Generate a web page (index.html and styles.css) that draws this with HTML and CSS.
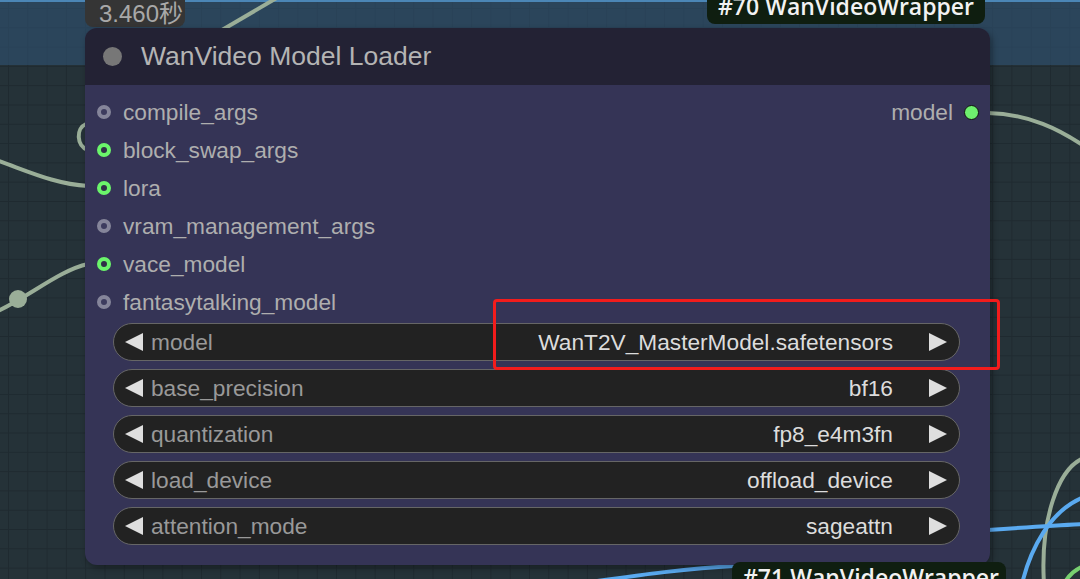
FILE: index.html
```html
<!doctype html>
<html lang="en">
<head>
	<meta charset="UTF-8">
	<title>WanVideo Model Loader</title>
	<link rel="stylesheet" href="styles.css">
</head>
<body>
	<div class="canvas">
		<div class="group_band"></div>

		<!-- 连线 -->
		<svg class="wires" width="1080" height="579" viewBox="0 0 1080 579">
			<path class="wire" d="M222 30 L280 -4"/>
			<path class="wire" d="M86 124 C76 128 76 146 88 150"/>
			<path class="wire" d="M-4 160 C30 172 55 184 88 186"/>
			<path class="wire" d="M-4 312 C30 296 60 270 88 264"/>
			<circle class="reroute" cx="18" cy="299" r="9"/>
			<path class="wire" d="M988 113 C1030 114 1060 130 1084 146"/>
			<path class="wire" d="M1084 458 C1058 468 1040 520 1044 584"/>
			<path class="wire blue" d="M988 530 C1030 527 1060 525 1084 524"/>
			<path class="wire blue" d="M1084 497 C1050 510 1030 550 1022 584"/>
			<path class="wire green" d="M1084 566 C1074 570 1068 576 1064 584"/>
			<path class="wire blue" d="M590 582 C640 575 690 568 734 566"/>
		</svg>

		<div class="badge_time">3.460秒</div>
		<div class="badge_id badge_top">#70 WanVideoWrapper</div>

		<div class="node">
			<div class="node_title">
				<span class="title_dot"></span>
				<span>WanVideo Model Loader</span>
			</div>
			<div class="node_body">
				<div class="slots">
					<div class="inputs">
						<div class="slot"><span class="slot_dot"></span>compile_args</div>
						<div class="slot"><span class="slot_dot linked"></span>block_swap_args</div>
						<div class="slot"><span class="slot_dot linked"></span>lora</div>
						<div class="slot"><span class="slot_dot"></span>vram_management_args</div>
						<div class="slot"><span class="slot_dot linked"></span>vace_model</div>
						<div class="slot"><span class="slot_dot"></span>fantasytalking_model</div>
					</div>
					<div class="outputs">
						<div class="slot">model<span class="out_dot"></span></div>
					</div>
				</div>
				<div class="widgets">
					<div class="widget">
						<svg class="arrow" width="18" height="18" viewBox="0 0 18 18"><polygon points="0,9 18,0 18,18"/></svg>
						<span class="w_label">model</span>
						<span class="w_value">WanT2V_MasterModel.safetensors</span>
						<svg class="arrow" width="18" height="18" viewBox="0 0 18 18"><polygon points="18,9 0,0 0,18"/></svg>
					</div>
					<div class="widget">
						<svg class="arrow" width="18" height="18" viewBox="0 0 18 18"><polygon points="0,9 18,0 18,18"/></svg>
						<span class="w_label">base_precision</span>
						<span class="w_value">bf16</span>
						<svg class="arrow" width="18" height="18" viewBox="0 0 18 18"><polygon points="18,9 0,0 0,18"/></svg>
					</div>
					<div class="widget">
						<svg class="arrow" width="18" height="18" viewBox="0 0 18 18"><polygon points="0,9 18,0 18,18"/></svg>
						<span class="w_label">quantization</span>
						<span class="w_value">fp8_e4m3fn</span>
						<svg class="arrow" width="18" height="18" viewBox="0 0 18 18"><polygon points="18,9 0,0 0,18"/></svg>
					</div>
					<div class="widget">
						<svg class="arrow" width="18" height="18" viewBox="0 0 18 18"><polygon points="0,9 18,0 18,18"/></svg>
						<span class="w_label">load_device</span>
						<span class="w_value">offload_device</span>
						<svg class="arrow" width="18" height="18" viewBox="0 0 18 18"><polygon points="18,9 0,0 0,18"/></svg>
					</div>
					<div class="widget">
						<svg class="arrow" width="18" height="18" viewBox="0 0 18 18"><polygon points="0,9 18,0 18,18"/></svg>
						<span class="w_label">attention_mode</span>
						<span class="w_value">sageattn</span>
						<svg class="arrow" width="18" height="18" viewBox="0 0 18 18"><polygon points="18,9 0,0 0,18"/></svg>
					</div>
				</div>
			</div>
		</div>

		<div class="highlight"></div>
		<div class="badge_id badge_bottom">#71 WanVideoWrapper</div>
	</div>
</body>
</html>
```
FILE: styles.css
```css
body{
	margin: 0;
	padding: 0;
	font-family: 'Liberation Sans', Arial, sans-serif;
	background-color: #243036;
}
.canvas{
	position: relative;
	width: 1080px;
	height: 579px;
	overflow: hidden;
	background-color: #253238;
	background-image:
		linear-gradient(to right, #1f2a30 1px, transparent 1px),
		linear-gradient(to bottom, #1f2a30 1px, transparent 1px);
	background-size: 19.3px 19.3px;
	background-position: 8px 8px;
}
.group_band{
	position: absolute;
	left: 0;
	top: 0;
	width: 1080px;
	height: 65px;
	border-top: 2px solid #4b86b6;
	box-sizing: border-box;
	background-color: rgba(50, 85, 120, 0.55);
}
.wires{
	position: absolute;
	left: 0;
	top: 0;
}
.wire{
	fill: none;
	stroke: #9aae98;
	stroke-width: 4;
}
.wire.blue{
	stroke: #5aaaf0;
}
.wire.green{
	stroke: #78d070;
}
.reroute{
	fill: #9aae98;
}

/* 顶部标签 */
.badge_time{
	position: absolute;
	left: 85px;
	top: -8px;
	width: 100px;
	height: 35px;
	box-sizing: border-box;
	padding: 2px 0 0 14px;
	background-color: #353535;
	border-radius: 0 0 8px 8px;
	color: #a8a8a8;
	font-size: 24px;
	font-family: 'Liberation Sans', 'Noto Sans CJK SC', sans-serif;
	white-space: nowrap;
}
.badge_id{
	position: absolute;
	background-color: #0f1e10;
	color: #f2f2f2;
	font-family: 'Open Sans', sans-serif;
	font-weight: 600;
	font-size: 23px;
	line-height: 30px;
	padding: 0 0 0 11px;
	border-radius: 8px;
	white-space: nowrap;
	box-sizing: border-box;
}
.badge_top{
	left: 707px;
	top: -9px;
	height: 33px;
	width: 278px;
}
.badge_bottom{
	left: 732px;
	top: 562px;
	height: 30px;
	width: 274px;
}

/* 节点 */
.node{
	position: absolute;
	left: 85px;
	top: 28px;
	width: 905px;
	height: 537px;
	border-radius: 12px;
	overflow: hidden;
	background-color: #353456;
	box-shadow: 2px 3px 6px rgba(0, 0, 0, 0.35);
	display: flex;
	flex-direction: column;
}
.node_title{
	height: 57px;
	flex: none;
	background-color: #232234;
	display: flex;
	align-items: center;
	color: #b4b4b4;
	font-size: 26.5px;
}
.title_dot{
	width: 19px;
	height: 19px;
	border-radius: 50%;
	background-color: #777;
	margin: 0 19px 0 18px;
}
.node_body{
	flex: 1;
	padding: 8px 30px 20px 0;
	display: flex;
	flex-direction: column;
}
.slots{
	display: flex;
	justify-content: space-between;
}
.slot{
	height: 38px;
	display: flex;
	align-items: center;
	color: #aeaeae;
	font-size: 22.7px;
}
.slot_dot{
	width: 6px;
	height: 6px;
	border: 4px solid #85859a;
	border-radius: 50%;
	background-color: #3d3c5e;
	margin: 0 12px 0 12px;
}
.slot_dot.linked{
	border-color: #6bf56b;
	background-color: #303048;
}
.outputs .slot{
	margin-right: -30px;
}
.out_dot{
	width: 13px;
	height: 13px;
	border: 1.5px solid #111;
	border-radius: 50%;
	background-color: #6ef06e;
	margin: 0 11px 0 11px;
}
.widgets{
	display: flex;
	flex-direction: column;
	gap: 8px;
	margin-left: 28px;
	margin-top: 2px;
}
.widget{
	height: 38px;
	box-sizing: border-box;
	border: 1.5px solid #666;
	border-radius: 19px;
	background-color: #222;
	display: flex;
	align-items: center;
	padding: 0 12px 0 11px;
	font-size: 22.7px;
}
.arrow{
	fill: #dedede;
	flex: none;
}
.w_label{
	color: #999;
	margin-left: 8px;
}
.w_value{
	flex: 1;
	text-align: right;
	color: #dcdcdc;
	margin-right: 36px;
}
.highlight{
	position: absolute;
	left: 493px;
	top: 299px;
	width: 507px;
	height: 71px;
	box-sizing: border-box;
	border: 3px solid #f21c1c;
	border-radius: 4px;
}
```
